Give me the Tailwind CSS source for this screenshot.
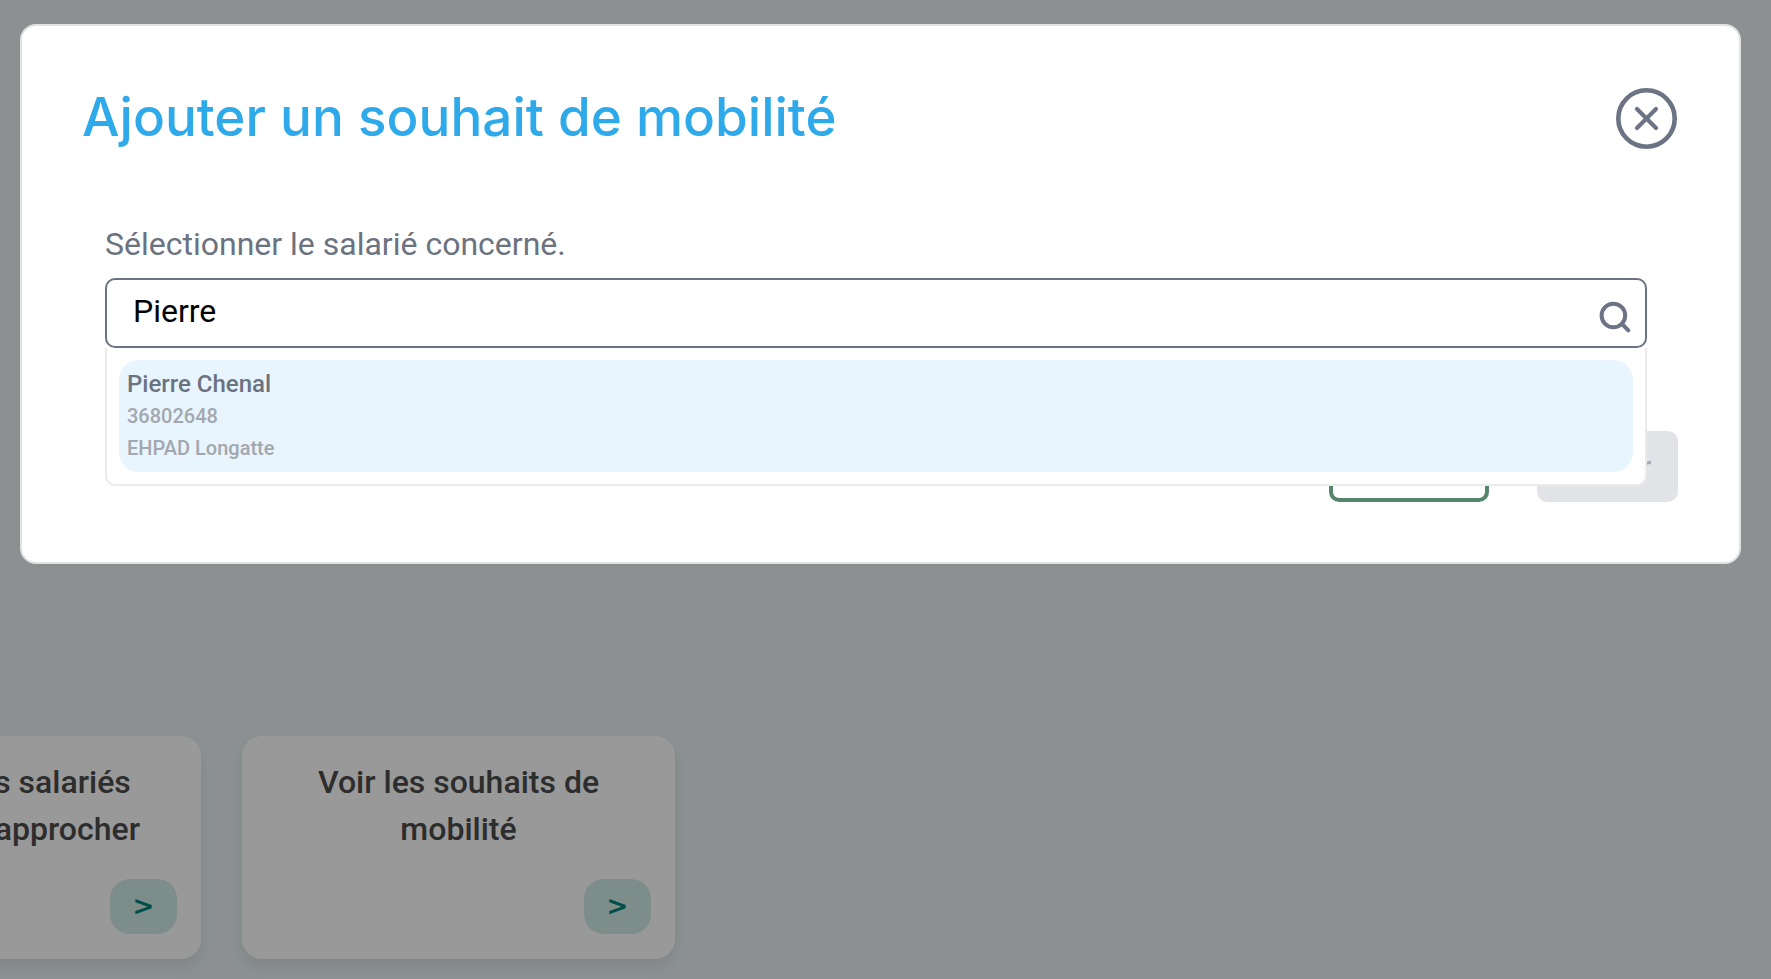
<!DOCTYPE html>
<html lang="fr">
	<head>
		<meta charset="UTF-8" />
		<meta name="viewport" content="width=device-width, initial-scale=1.0" />
		<title>Ajouter un souhait de mobilité</title>
		<script src="https://cdn.jsdelivr.net/npm/@tailwindcss/browser@4"></script>
	</head>
	<body class="min-h-screen overflow-hidden bg-[#e9f1f1] font-['Roboto',sans-serif]">
		<main class="flex h-screen flex-col justify-end overflow-hidden pb-5">
			<div class="-ml-[232px] flex gap-[41px]">
				<section
					class="flex w-[433px] shrink-0 flex-col rounded-[20px] bg-white px-6 pt-[23px] pb-[25px] shadow-[0_8px_16px_rgba(0,0,0,0.08)]"
				>
					<h2 class="text-center text-[32px] leading-[47px] font-medium text-[#4b4b4b]">
						Afficher des salariés<br />voulant se rapprocher
					</h2>
					<a
						href="#"
						class="mt-[26px] flex h-[55px] w-[67px] items-center justify-center self-end rounded-[20px] bg-[#d1ebe7] text-[26px] font-bold text-[#00857a] font-['DejaVu_Sans',sans-serif]"
						>&gt;</a
					>
				</section>
				<section
					class="flex w-[433px] shrink-0 flex-col rounded-[20px] bg-white px-6 pt-[23px] pb-[25px] shadow-[0_8px_16px_rgba(0,0,0,0.08)]"
				>
					<h2 class="text-center text-[32px] leading-[47px] font-medium text-[#4b4b4b]">
						Voir les souhaits de<br />mobilité
					</h2>
					<a
						href="#"
						class="mt-[26px] flex h-[55px] w-[67px] items-center justify-center self-end rounded-[20px] bg-[#d1ebe7] text-[26px] font-bold text-[#00857a] font-['DejaVu_Sans',sans-serif]"
						>&gt;</a
					>
				</section>
			</div>
		</main>

		<!-- Overlay and dialog -->
		<div class="fixed inset-0 bg-black/40 pt-6 pr-[30px] pl-5">
			<div
				role="dialog"
				aria-modal="true"
				aria-labelledby="dialog-title"
				class="rounded-2xl border-2 border-[#e0e2e4] bg-white px-[60px] pt-[62px] pb-[60px]"
			>
				<div class="flex items-start justify-between pr-[2px]">
					<h1
						id="dialog-title"
						class="text-[53px] leading-[58px] font-medium text-[#2ea9e9] font-['Inter',sans-serif]"
					>
						Ajouter un souhait de mobilité
					</h1>
					<button type="button" aria-label="Fermer" class="text-[#6b7385]">
						<svg
							class="size-[61px]"
							aria-hidden="true"
							fill="none"
							xmlns="http://www.w3.org/2000/svg"
							viewBox="0 0 61 61"
							stroke="currentColor"
							stroke-linecap="round"
							stroke-width="4.6"
						>
							<circle cx="30.5" cy="30.5" r="28.2" />
							<path d="M21 21l19 19M40 21L21 40" stroke-width="4.2" />
						</svg>
					</button>
				</div>
				<form class="mt-[71px]">
					<div class="pr-8 pl-[23px]">
						<label for="salarie" class="block text-[32px] leading-[48px] text-[#6b7280]"
							>Sélectionner le salarié concerné.</label
						>
						<div class="relative mt-[10px]">
							<input
								type="text"
								id="salarie"
								name="salarie"
								value="Pierre"
								autocomplete="off"
								class="block h-[70px] w-full rounded-[10px] border-2 border-[#6b7385] pr-16 pb-1 pl-[26px] text-[32px] text-black focus:outline-none"
							/>
							<svg
								class="absolute top-[23px] right-4 size-8 text-[#6b7385]"
								aria-hidden="true"
								fill="none"
								xmlns="http://www.w3.org/2000/svg"
								viewBox="0 0 32 32"
								stroke="currentColor"
								stroke-linecap="round"
								stroke-width="4"
							>
								<circle cx="14.4" cy="14.5" r="11.8" />
								<path d="M23 23l6.3 6.3" />
							</svg>
							<!-- Suggestions -->
							<ul
								class="absolute inset-x-0 top-full rounded-b-[10px] border-2 border-t-0 border-[#ebebeb] bg-white px-3 py-3"
							>
								<li class="rounded-[20px] bg-[#e8f5fe] px-2 py-2 font-medium">
									<p class="text-[24px] leading-8 text-[#6b7280]">Pierre Chenal</p>
									<p class="text-[20px] leading-8 text-[#a3a7ae]">36802648</p>
									<p class="text-[20px] leading-8 text-[#a3a7ae]">EHPAD Longatte</p>
								</li>
							</ul>
						</div>
					</div>
					<div class="mt-[83px] flex justify-end gap-12 pr-px">
						<button
							type="button"
							class="h-[71px] w-[160px] rounded-[10px] border-4 border-[#55866b] text-[30px] font-medium text-[#55866b]"
						>
							Annuler
						</button>
						<button
							type="submit"
							disabled
							class="h-[71px] w-[141px] rounded-[10px] bg-[#e1e3e7] text-[28px] font-medium text-[#a3a7ae]"
						>
							Valider
						</button>
					</div>
				</form>
			</div>
		</div>
	</body>
</html>
